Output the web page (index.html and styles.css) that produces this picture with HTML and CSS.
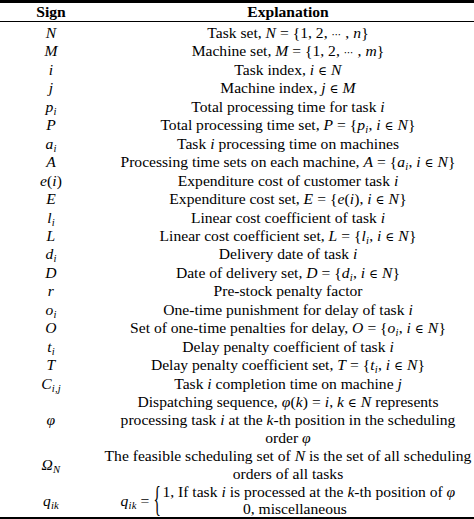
FILE: index.html
```html
<!DOCTYPE html>
<html>
<head>
<meta charset="utf-8">
<link rel="stylesheet" href="styles.css">
</head>
<body>
<table class="tbl">
<thead>
<tr><th class="c-sign">Sign</th><th class="c-exp">Explanation</th></tr>
</thead>
<tbody>
<tr class="first"><td><i class="m">N</i></td><td>Task set, <i class="m">N</i> = {1, 2, <span class="dots">⋯</span> , <i class="m">n</i>}</td></tr>
<tr><td><i class="m">M</i></td><td>Machine set, <i class="m">M</i> = {1, 2, <span class="dots">⋯</span> , <i class="m">m</i>}</td></tr>
<tr><td><i class="m">i</i></td><td>Task index, <i class="m">i</i> <span class="op">∈</span> <i class="m">N</i></td></tr>
<tr><td><i class="m">j</i></td><td>Machine index, <i class="m">j</i> <span class="op">∈</span> <i class="m">M</i></td></tr>
<tr><td><i class="m">p<sub>i</sub></i></td><td>Total processing time for task <i>i</i></td></tr>
<tr><td><i class="m">P</i></td><td>Total processing time set, <i class="m">P</i> = {<i class="m">p<sub>i</sub></i>, <i class="m">i</i> <span class="op">∈</span> <i class="m">N</i>}</td></tr>
<tr><td><i class="m">a<sub>i</sub></i></td><td>Task <i>i</i> processing time on machines</td></tr>
<tr><td><i class="m">A</i></td><td>Processing time sets on each machine, <i class="m">A</i> = {<i class="m">a<sub>i</sub></i>, <i class="m">i</i> <span class="op">∈</span> <i class="m">N</i>}</td></tr>
<tr><td><i class="m">e</i>(<i class="m">i</i>)</td><td>Expenditure cost of customer task <i>i</i></td></tr>
<tr><td><i class="m">E</i></td><td>Expenditure cost set, <i class="m">E</i> = {<i class="m">e</i>(<i class="m">i</i>), <i class="m">i</i> <span class="op">∈</span> <i class="m">N</i>}</td></tr>
<tr><td><i class="m">l<sub>i</sub></i></td><td>Linear cost coefficient of task <i>i</i></td></tr>
<tr><td><i class="m">L</i></td><td>Linear cost coefficient set, <i class="m">L</i> = {<i class="m">l<sub>i</sub></i>, <i class="m">i</i> <span class="op">∈</span> <i class="m">N</i>}</td></tr>
<tr><td><i class="m">d<sub>i</sub></i></td><td>Delivery date of task <i>i</i></td></tr>
<tr><td><i class="m">D</i></td><td>Date of delivery set, <i class="m">D</i> = {<i class="m">d<sub>i</sub></i>, <i class="m">i</i> <span class="op">∈</span> <i class="m">N</i>}</td></tr>
<tr><td><i class="m">r</i></td><td>Pre-stock penalty factor</td></tr>
<tr><td><i class="m">o<sub>i</sub></i></td><td>One-time punishment for delay of task <i>i</i></td></tr>
<tr><td><i class="m">O</i></td><td>Set of one-time penalties for delay, <i class="m">O</i> = {<i class="m">o<sub>i</sub></i>, <i class="m">i</i> <span class="op">∈</span> <i class="m">N</i>}</td></tr>
<tr><td><i class="m">t<sub>i</sub></i></td><td>Delay penalty coefficient of task <i>i</i></td></tr>
<tr><td><i class="m">T</i></td><td>Delay penalty coefficient set, <i class="m">T</i> = {<i class="m">t<sub>i</sub></i>, <i class="m">i</i> <span class="op">∈</span> <i class="m">N</i>}</td></tr>
<tr><td><i class="m">C<sub>i,j</sub></i></td><td>Task <i>i</i> completion time on machine <i>j</i></td></tr>
<tr class="multi phi"><td><i class="m">φ</i></td><td>Dispatching sequence, <i class="m">φ</i>(<i class="m">k</i>) = <i class="m">i</i>, <i class="m">k</i> <span class="op">∈</span> <i class="m">N</i> represents<br>processing task <i>i</i> at the <i>k</i>-th position in the scheduling<br>order <i>φ</i></td></tr>
<tr class="multi"><td><i class="m">Ω<sub>N</sub></i></td><td>The feasible scheduling set of <i>N</i> is the set of all scheduling<br>orders of all tasks</td></tr>
<tr class="multi last"><td><i class="m">q<sub>ik</sub></i></td><td><span class="cases"><span class="lhs"><i class="m">q<sub>ik</sub></i> =</span><span class="brace">{</span><span class="alts"><span class="alt">1, If task <i>i</i> is processed at the <i>k</i>-th position of <i class="m">φ</i></span><span class="alt alt2">0, miscellaneous</span></span></span></td></tr>
</tbody>
</table>
</body>
</html>
```
FILE: styles.css
```css
html, body {
  margin: 0;
  padding: 0;
  background: #ffffff;
}

body {
  font-family: "Liberation Serif", "Times New Roman", serif;
  font-size: 15.6px;
  color: #000000;
}

.tbl {
  width: 474px;
  border-collapse: collapse;
  border-top: 3px solid #000000;
  border-bottom: 3px solid #000000;
}

.tbl th {
  font-weight: bold;
  line-height: 18px;
  padding: 0;
  border-bottom: 1px solid #000000;
  text-align: center;
}

.c-sign {
  width: 102px;
}

.tbl td {
  padding: 0;
  line-height: 18.45px;
  text-align: center;
  vertical-align: middle;
  white-space: nowrap;
}

.tbl tr.first td {
  padding-top: 2px;
}

.tbl tr.multi td {
  line-height: 18px;
}

.tbl tr.last td {
  line-height: 17px;
}

i {
  font-style: italic;
  line-height: 0;
}

.m {
  font-style: italic;
  letter-spacing: 0.2px;
}

.op {
  font-family: "DejaVu Serif", serif;
  font-size: 12px;
  line-height: 0;
}

.dots {
  font-family: "DejaVu Sans", sans-serif;
  font-size: 10px;
  line-height: 0;
}

sub {
  font-size: 0.68em;
  line-height: 0;
  vertical-align: -0.25em;
}

.cases {
  display: inline-flex;
  align-items: center;
}

.lhs {
  padding-right: 4px;
}

.brace {
  display: inline-block;
  font-size: 17px;
  line-height: 18px;
  transform: scale(0.9, 2.1);
  margin-right: 1px;
}

.alts {
  display: inline-flex;
  flex-direction: column;
  align-items: center;
}

.alt {
  line-height: 17px;
}

.alt2 {
  padding-right: 28px;
}
```
